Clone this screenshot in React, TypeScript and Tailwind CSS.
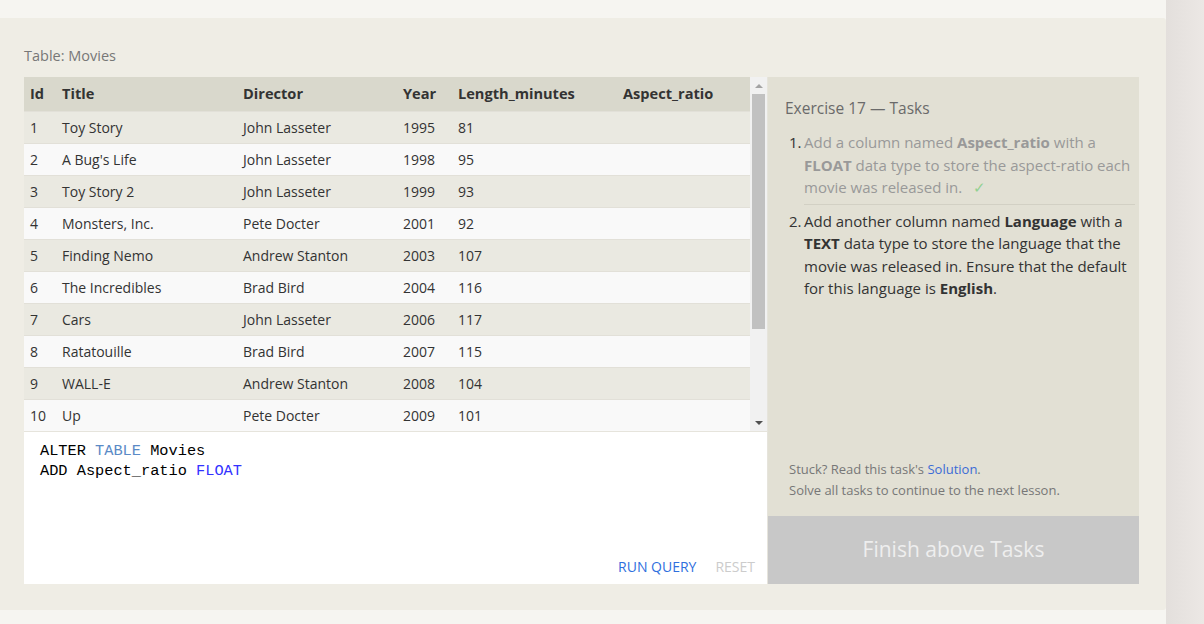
import React from 'react';

type Movie = [number, string, string, number, number];

const movies: Movie[] = [
  [1, 'Toy Story', 'John Lasseter', 1995, 81],
  [2, "A Bug's Life", 'John Lasseter', 1998, 95],
  [3, 'Toy Story 2', 'John Lasseter', 1999, 93],
  [4, 'Monsters, Inc.', 'Pete Docter', 2001, 92],
  [5, 'Finding Nemo', 'Andrew Stanton', 2003, 107],
  [6, 'The Incredibles', 'Brad Bird', 2004, 116],
  [7, 'Cars', 'John Lasseter', 2006, 117],
  [8, 'Ratatouille', 'Brad Bird', 2007, 115],
  [9, 'WALL-E', 'Andrew Stanton', 2008, 104],
  [10, 'Up', 'Pete Docter', 2009, 101],
];

const cols = ['w-[32px]', 'w-[181px]', 'w-[160px]', 'w-[55px]', 'w-[165px]', 'w-[133px]'];
const headers = ['Id', 'Title', 'Director', 'Year', 'Length_minutes', 'Aspect_ratio'];

const MovieTable = () => (
  <div className="flex h-[354px]">
    <div className="w-[726px]">
      <div className="flex h-[34px] items-center bg-[#d9d8cc] font-bold text-[14.6px] text-[#333]">
        {headers.map((h, i) => (
          <div key={h} className={`${cols[i]} pl-[6px]`}>
            {h}
          </div>
        ))}
      </div>
      {movies.map((m, r) => (
        <div
          key={m[0]}
          className={`flex h-[32px] items-center border-t border-[#e2e0d8] text-[14px] text-[#333] ${
            r % 2 === 0 ? 'bg-[#eae9e1]' : 'bg-[#f9f9f9]'
          }`}
        >
          {[...m, ''].map((v, i) => (
            <div key={i} className={`${cols[i]} pl-[6px]`}>
              {v}
            </div>
          ))}
        </div>
      ))}
    </div>
    {/* scrollbar */}
    <div className="flex w-[17px] flex-col items-center bg-[#f1f1f1]">
      <div className="flex h-[17px] w-full items-center justify-center">
        <div className="h-0 w-0 border-x-[4px] border-b-[4px] border-x-transparent border-b-[#a3a3a3]" />
      </div>
      <div className="h-[235px] w-[13px] bg-[#c1c1c1]" />
      <div className="flex-1" />
      <div className="flex h-[17px] w-full items-center justify-center">
        <div className="h-0 w-0 border-x-[4px] border-t-[4px] border-x-transparent border-t-[#505050]" />
      </div>
    </div>
  </div>
);

const Editor = () => (
  <div className="flex h-[153px] flex-col border-t border-[#e6e4dc] bg-white">
    <pre className="pl-[16px] pt-[9px] font-['Liberation_Mono',monospace] text-[15.3px] leading-[20px] text-black">
      {'ALTER '}
      <span className="text-[#5a8ac6]">TABLE</span>
      {' Movies\nADD Aspect_ratio '}
      <span className="text-[#3333ff]">FLOAT</span>
    </pre>
    <div className="flex-1" />
    <div className="flex justify-end gap-[19px] pb-[7px] pr-[12px] text-[14px] uppercase">
      <span className="text-[#2f6fde]">Run Query</span>
      <span className="text-[#cccccc]">Reset</span>
    </div>
  </div>
);

const Tasks = () => (
  <div className="flex w-[371px] flex-col bg-[#e2e0d4]">
    <div className="pl-[17px] pt-[20px] text-[15.5px] leading-[22px] text-[#6a6a6a]">
      Exercise 17 — Tasks
    </div>
    <ol className="mt-[12px] pl-[21px] pr-[4px] text-[15px] leading-[22.5px]">
      <li className="flex pb-[5px]">
        <span className="w-[15px] shrink-0 text-[#333]">1.</span>
        <div className="border-b border-[#d2d0c4] pb-[5px] text-[#999]">
          Add a column named <b>Aspect_ratio</b> with a <b>FLOAT</b> data type to store the
          aspect-ratio each movie was released in.
          <span className="ml-[11px] text-[#92d192]">✓</span>
        </div>
      </li>
      <li className="flex">
        <span className="w-[15px] shrink-0 text-[#333]">2.</span>
        <div className="pr-[6px] text-[#333]">
          Add another column named <b>Language</b> with a <b>TEXT</b> data type to store the
          language that the movie was released in. Ensure that the default for this language is{' '}
          <b>English</b>.
        </div>
      </li>
    </ol>
    <div className="flex-1" />
    <div className="mb-[15px] pl-[21px] text-[13px] leading-[21px] text-[#777]">
      <div>
        Stuck? Read this task's <span className="text-[#3b6bd6]">Solution</span>.
      </div>
      <div>Solve all tasks to continue to the next lesson.</div>
    </div>
    <div className="flex h-[68px] items-center justify-center bg-[#c8c8c8] text-[21px] text-[#eeeeee]">
      Finish above Tasks
    </div>
  </div>
);

export default function App() {
  return (
    <div className="flex h-[624px] w-[1204px] overflow-hidden bg-[#f6f5f1] font-['Open_Sans',sans-serif]">
      <div className="flex w-[1166px] flex-col pt-[18px] pb-[14px]">
        <section className="flex flex-1 flex-col rounded-r-[3px] bg-[#efede5] pl-[24px] pt-[28px]">
          <div className="text-[14.5px] leading-[20px] text-[#777]">Table: Movies</div>
          <div className="mt-[11px] flex w-[1115px]">
            <div className="flex w-[743px] flex-col">
              <MovieTable />
              <Editor />
            </div>
            <div className="w-px bg-[#e6e4dc]" />
            <Tasks />
          </div>
        </section>
      </div>
      <div className="flex-1 bg-gradient-to-r from-[#e3dfdc] to-[#ece8e5]" />
    </div>
  );
}
